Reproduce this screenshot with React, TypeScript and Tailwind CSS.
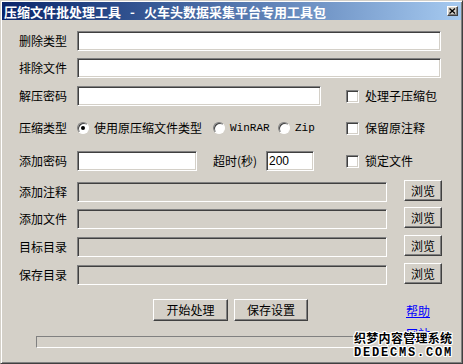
import React from 'react';

const cjk = "font-['SimSun','Noto_Sans_CJK_SC',sans-serif]";

const sunken =
  'border border-t-[#808080] border-l-[#808080] border-r-white border-b-white shadow-[inset_1px_1px_0_#404040,inset_-1px_-1px_0_#d4d0c8]';
const raised =
  'border border-t-white border-l-white border-r-[#404040] border-b-[#404040] shadow-[inset_-1px_-1px_0_#808080]';

function TextBox({ width, value, disabled }: { width: string; value?: string; disabled?: boolean }) {
  return (
    <div
      className={`${width} h-[20px] flex-none ${sunken} ${disabled ? 'bg-[#d4d0c8]' : 'bg-white'} flex items-center pl-[2px] text-[12px] text-black font-['Liberation_Sans',sans-serif]`}
    >
      {value}
    </div>
  );
}

function CheckBox({ label }: { label: string }) {
  return (
    <div className="flex items-center flex-none">
      <div className={`w-[13px] h-[13px] bg-white ${sunken}`} />
      <span className="ml-[6px] text-[12px] leading-[14px] text-black">{label}</span>
    </div>
  );
}

function Radio({ checked }: { checked?: boolean }) {
  return (
    <div className="w-[12px] h-[12px] flex-none rounded-full bg-white border border-t-[#808080] border-l-[#808080] border-r-white border-b-white shadow-[inset_1px_1px_0_#404040] flex items-center justify-center">
      {checked && <div className="w-[4px] h-[4px] rounded-full bg-black" />}
    </div>
  );
}

function Label({ text }: { text: string }) {
  return <span className="w-[58px] flex-none text-[12px] leading-[14px] text-black">{text}</span>;
}

function BrowseRow({ label, mt }: { label: string; mt: string }) {
  return (
    <div className={`flex h-[22px] ${mt}`}>
      <div className="flex items-center self-end h-[20px]">
        <Label text={label} />
      </div>
      <div className="self-end">
        <TextBox width="w-[310px]" disabled />
      </div>
      <button
        className={`ml-[17px] w-[38px] h-[21px] self-start bg-[#d4d0c8] ${raised} text-[12px] leading-none text-black flex items-center justify-center`}
      >
        浏览
      </button>
    </div>
  );
}

export default function App() {
  return (
    <div
      className={`w-[463px] h-[364px] bg-[#d4d0c8] border border-t-[#d4d0c8] border-l-[#d4d0c8] border-r-[#404040] border-b-[#404040] shadow-[inset_1px_1px_0_white,inset_-1px_-1px_0_#808080] p-[1px] overflow-hidden relative ${cjk}`}
    >
      {/* 标题栏 */}
      <div className="h-[18px] bg-gradient-to-r from-[#0a246a] to-[#a6caf0] flex items-center justify-between pl-[2px] pr-[3px]">
        <div className="flex items-center text-white font-bold text-[13px] leading-none whitespace-nowrap">
          <span>压缩文件批处理工具</span>
          <span className="w-[23px] text-center">-</span>
          <span>火车头数据采集平台专用工具包</span>
        </div>
        <div className={`w-[11px] h-[10px] bg-[#d4d0c8] ${raised} flex items-center justify-center`}>
          <svg width="7" height="6" viewBox="0 0 7 6">
            <path d="M0.5 0.5 L6 5.5 M6 0.5 L0.5 5.5" stroke="black" strokeWidth="1.3" />
          </svg>
        </div>
      </div>

      <div className="pl-[17px] flex flex-col">
        <div className="flex items-center h-[20px] mt-[11px]">
          <Label text="删除类型" />
          <TextBox width="w-[364px]" />
        </div>
        <div className="flex items-center h-[20px] mt-[7px]">
          <Label text="排除文件" />
          <TextBox width="w-[364px]" />
        </div>
        <div className="flex items-center h-[20px] mt-[8px]">
          <div className="w-[327px] flex-none flex items-center">
            <Label text="解压密码" />
            <TextBox width="w-[244px]" />
          </div>
          <CheckBox label="处理子压缩包" />
        </div>
        <div className="flex items-center h-[20px] mt-[12px]">
          <div className="w-[327px] flex-none flex items-center">
            <Label text="压缩类型" />
            <Radio checked />
            <span className="ml-[5px] w-[108px] flex-none text-[12px] leading-[14px] text-black whitespace-nowrap">使用原压缩文件类型</span>
            <div className="ml-[11px]">
              <Radio />
            </div>
            <span className="ml-[5px] w-[43px] flex-none text-[11px] leading-[14px] text-black font-['Liberation_Mono',monospace]">WinRAR</span>
            <div className="ml-[5px]">
              <Radio />
            </div>
            <span className="ml-[5px] text-[11px] leading-[14px] text-black font-['Liberation_Mono',monospace]">Zip</span>
          </div>
          <CheckBox label="保留原注释" />
        </div>
        <div className="flex items-center h-[20px] mt-[13px]">
          <div className="w-[327px] flex-none flex items-center">
            <Label text="添加密码" />
            <TextBox width="w-[120px]" />
            <span className="ml-[16px] w-[53px] flex-none text-[12px] leading-[14px] text-black">超时(秒)</span>
            <TextBox width="w-[48px]" value="200" />
          </div>
          <CheckBox label="锁定文件" />
        </div>

        <BrowseRow label="添加注释" mt="mt-[9px]" />
        <BrowseRow label="添加文件" mt="mt-[5px]" />
        <BrowseRow label="目标目录" mt="mt-[6px]" />
        <BrowseRow label="保存目录" mt="mt-[6px]" />

        <div className="flex mt-[14px]">
          <div className="w-[368px] flex-none flex flex-col">
            <div className="flex ml-[134px] gap-[6px]">
              <button className={`w-[75px] h-[22px] bg-[#d4d0c8] ${raised} text-[12px] leading-none text-black`}>开始处理</button>
              <button className={`w-[74px] h-[22px] bg-[#d4d0c8] ${raised} text-[12px] leading-none text-black`}>保存设置</button>
            </div>
            <div className="ml-[17px] mt-[15px] w-[352px] h-[12px] border border-t-[#808080] border-l-[#808080] border-r-white border-b-white" />
          </div>
          <div className="ml-[19px] flex flex-col pt-[4px] gap-[8px] text-[12px] leading-[15px] text-[#0000ff] underline">
            <span>帮助</span>
            <span>网站</span>
          </div>
        </div>
      </div>

      {/* 水印 */}
      <div className="absolute left-[353px] top-[330px] flex flex-col items-start text-black font-bold [text-shadow:1px_0_0_#fff,-1px_0_0_#fff,0_1px_0_#fff,0_-1px_0_#fff,1px_1px_0_#fff,-1px_-1px_0_#fff,1px_-1px_0_#fff,-1px_1px_0_#fff]">
        <span className="text-[12px] leading-[14px] tracking-[0.3px]">织梦内容管理系统</span>
        <span className="mt-[2px] text-[12px] leading-[13px] tracking-[1.8px] font-['Liberation_Mono',monospace]">DEDECMS.COM</span>
      </div>
    </div>
  );
}
